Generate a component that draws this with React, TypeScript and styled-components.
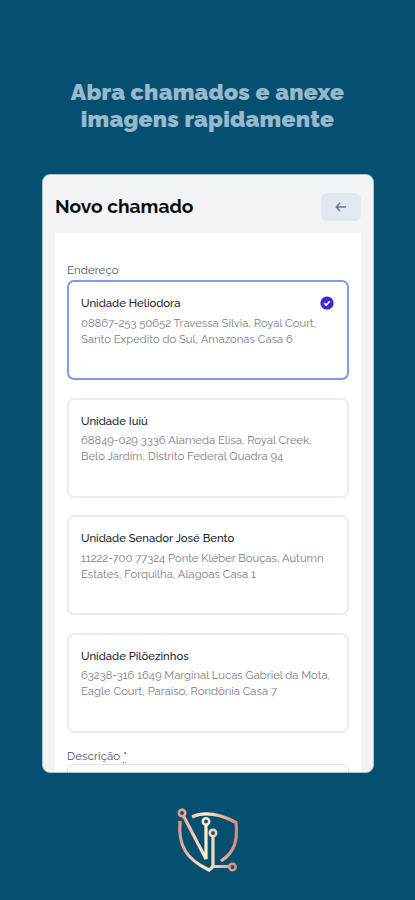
import React from "react";
import styled, { createGlobalStyle } from "styled-components";

const GlobalStyle = createGlobalStyle`
  * { box-sizing: border-box; }
  html, body { margin: 0; padding: 0; background: #054f70; }
`;

const Page = styled.main`
  width: 415px;
  height: 900px;
  overflow: hidden;
  background: #054f70;
  display: flex;
  flex-direction: column;
  align-items: center;
  font-family: Raleway, Lato, sans-serif;
`;

const Headline = styled.h1`
  margin: 78px 0 0;
  height: 96px;
  display: flex;
  flex-direction: column;
  align-items: center;
  font-size: 23px;
  line-height: 27px;
  font-weight: 900;
  color: #97b9cd;
  white-space: nowrap;
`;

const Line = styled.span<{ $track?: number }>`
  display: block;
  white-space: nowrap;
  letter-spacing: ${({ $track = 0 }) => $track}px;
`;

const Screen = styled.section`
  width: 332px;
  height: 599px;
  margin-left: 1px;
  flex: none;
  overflow: hidden;
  border: 1px solid #a9c3d0;
  border-radius: 8px;
  background: #f2f4f6;
  padding: 0 12px;
`;

const TopBar = styled.header`
  height: 58px;
  display: flex;
  align-items: center;
  justify-content: space-between;
  padding-top: 5px;
`;

const Title = styled.h2`
  margin: 0 0 2px;
  font-size: 19.2px;
  line-height: 24px;
  font-weight: 700;
  color: #0b0d12;
`;

const BackButton = styled.button`
  width: 40px;
  height: 28px;
  border: 0;
  border-radius: 6px;
  background: #e2e8f0;
  padding: 0;
  display: flex;
  align-items: center;
  justify-content: center;
`;

const Form = styled.div`
  height: 560px;
  background: #fff;
  padding: 29px 12px 0;
`;

const Label = styled.label`
  display: flex;
  height: 18px;
  font-size: 11.4px;
  line-height: 17px;
  color: #4b5260;
`;

const Options = styled.div`
  display: flex;
  flex-direction: column;
  gap: 17.6px;
`;

const Option = styled.article<{ $selected?: boolean }>`
  height: 100px;
  display: flex;
  justify-content: space-between;
  border: 2px solid ${({ $selected }) => ($selected ? "#8299ef" : "#ebedef")};
  border-radius: 7px;
  padding: 12px 13px 0 12px;
`;

const OptionText = styled.div`
  min-width: 0;
  width: 230px;
`;

const Name = styled.div`
  font-size: 11.3px;
  line-height: 18px;
  font-weight: 500;
  color: #20242b;
`;

const Address = styled.div`
  padding-top: 2.5px;
  font-size: 11.25px;
  line-height: 16px;
  color: #777d87;
`;

const Badge = styled.svg`
  flex: none;
  margin-top: 2px;
`;

const Description = styled.div`
  padding-top: 15px;
`;

const Asterisk = styled.abbr`
  margin-left: 3px;
  color: #20242b;
  text-decoration: underline dotted #8a8f98 1px;
  text-underline-offset: 2px;
`;

const TextArea = styled.div`
  height: 60px;
  margin-top: -2px;
  border: 1px solid #dfe2e5;
  border-radius: 6px;
`;

const Logo = styled.svg`
  flex: none;
  margin: 35px 2px 0 0;
`;

const places: { name: string; lines: string[]; selected?: boolean }[] = [
  {
    name: "Unidade Heliodora",
    lines: ["08867-253 50652 Travessa Silvia, Royal Court,", "Santo Expedito do Sul, Amazonas Casa 6"],
    selected: true,
  },
  {
    name: "Unidade Iuiú",
    lines: ["68849-029 3336 Alameda Elisa, Royal Creek,", "Belo Jardim, Distrito Federal Quadra 94"],
  },
  {
    name: "Unidade Senador José Bento",
    lines: ["11222-700 77324 Ponte Kléber Bouças, Autumn", "Estates, Forquilha, Alagoas Casa 1"],
  },
  {
    name: "Unidade Pilõezinhos",
    lines: ["63238-316 1649 Marginal Lucas Gabriel da Mota,", "Eagle Court, Paraíso, Rondônia Casa 7"],
  },
];

export default function App() {
  return (
    <Page>
      <GlobalStyle />
      <Headline>
        <Line $track={0.23}>Abra chamados e anexe</Line>
        <Line $track={0.23}>imagens rapidamente</Line>
      </Headline>
      <Screen>
        <TopBar>
          <Title>Novo chamado</Title>
          <BackButton aria-label="Voltar">
            <svg width="12" height="12" viewBox="0 0 12 12" fill="none" stroke="#6c7481" strokeWidth="1.3">
              <path d="M5.2 1.8 1.2 6l4 4.2M1.2 6H11" />
            </svg>
          </BackButton>
        </TopBar>
        <Form>
          <Label><Line $track={0.1}>Endereço</Line></Label>
          <Options>
            {places.map((p) => (
              <Option key={p.name} $selected={p.selected}>
                <OptionText>
                  <Name><Line>{p.name}</Line></Name>
                  <Address>
                    {p.lines.map((t) => <Line key={t}>{t}</Line>)}
                  </Address>
                </OptionText>
                {p.selected && (
                  <Badge width="14" height="14" viewBox="0 0 14 14">
                    <circle cx="7" cy="7" r="6.6" fill="#3b27d3" />
                    <path d="m4.2 7.2 2 1.9 3.6-3.9" fill="none" stroke="#fff" strokeWidth="1.6" />
                  </Badge>
                )}
              </Option>
            ))}
          </Options>
          <Description>
            <Label><Line $track={0.1}>Descrição</Line><Asterisk>*</Asterisk></Label>
            <TextArea />
          </Description>
        </Form>
      </Screen>
      <Logo width="64" height="66" viewBox="0 0 64 66" fill="none">
        <defs>
          <linearGradient id="copper" x1="0" y1="0" x2="64" y2="0" gradientUnits="userSpaceOnUse">
            <stop offset="0.03" stopColor="#dc9684" />
            <stop offset="0.28" stopColor="#f2c9ad" />
            <stop offset="0.48" stopColor="#fff0d2" />
            <stop offset="0.7" stopColor="#f0bfa2" />
            <stop offset="0.95" stopColor="#d98c7d" />
          </linearGradient>
        </defs>
        <g stroke="url(#copper)" strokeWidth="3.2">
          <path d="M17 9C29 3 46 6 61 14.500C63 32 60 44 46 53" />
          <path d="M5 13C3 38 11 51 34 62L38 58.500H54" />
          <path d="M8.500 8 31 51V16M38 59V28" />
          <circle cx="7" cy="5" r="3.2" strokeWidth="2.6" />
          <circle cx="31" cy="13.500" r="3.2" strokeWidth="2.6" />
          <circle cx="38" cy="25" r="3.2" strokeWidth="2.6" />
          <circle cx="57.500" cy="59" r="3.2" strokeWidth="2.6" />
        </g>
      </Logo>
    </Page>
  );
}
